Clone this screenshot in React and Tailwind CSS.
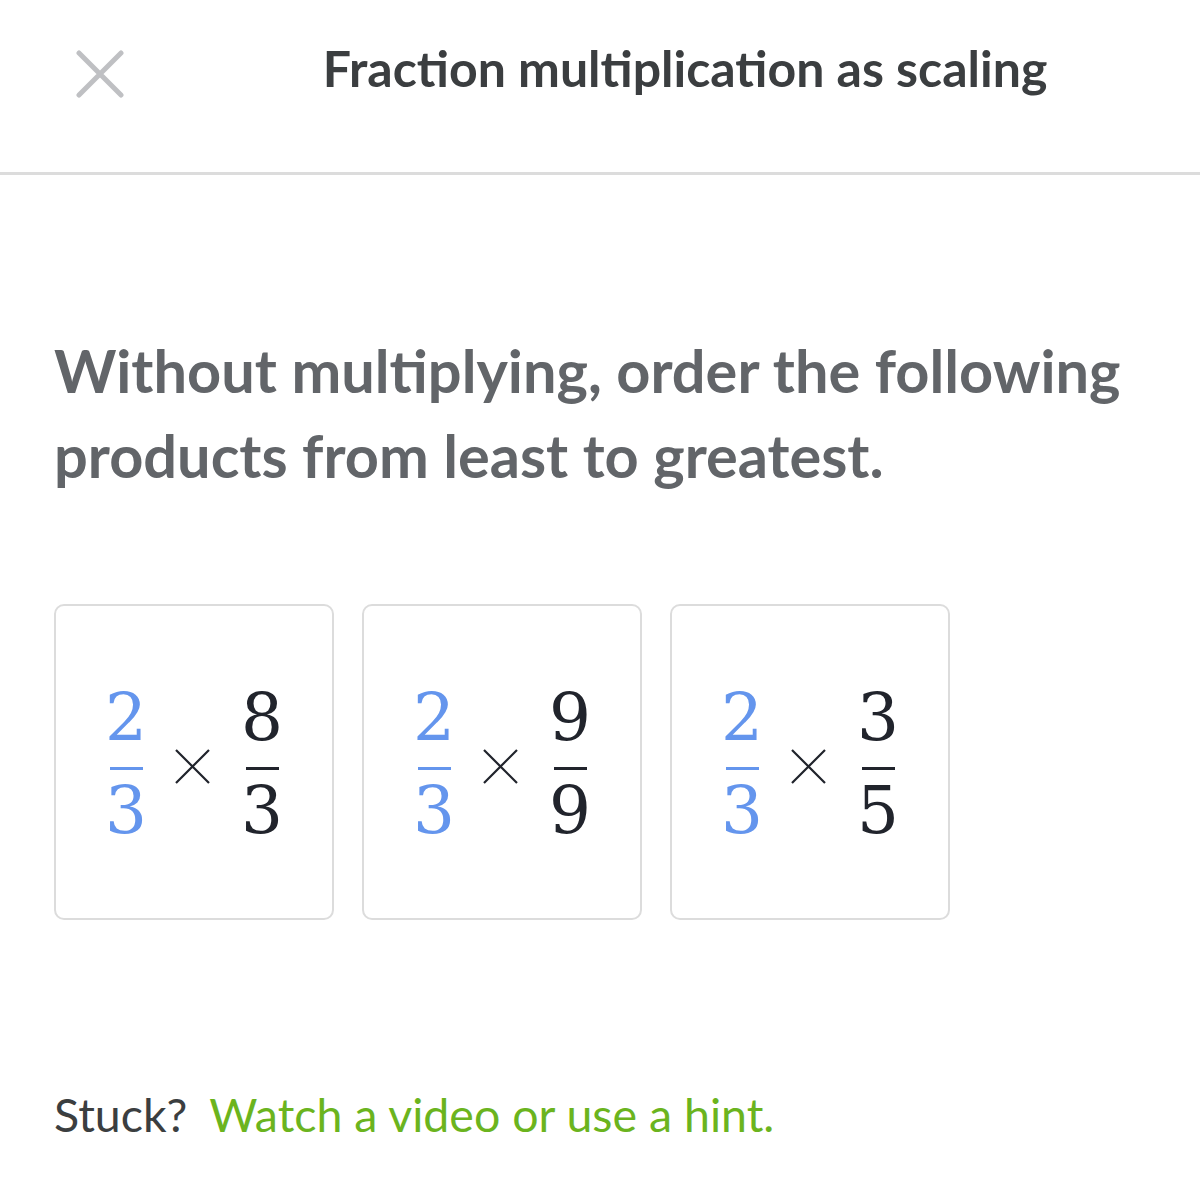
const Fraction = ({ num, den, color }) => (
  <span className={`inline-flex w-[42px] flex-col items-center ${color}`}>
    <span className="leading-none">{num}</span>
    <span className="mb-[8px] mt-[16px] h-[3px] w-[33px] bg-current" />
    <span className="leading-none">{den}</span>
  </span>
);

const ProductCard = ({ second }) => (
  <div className="flex h-[316px] w-[280px] items-center justify-center rounded-[10px] border-2 border-[#dcdcdc] bg-white pt-[5px]">
    <div className="flex items-center text-[66px] font-['DejaVu_Serif',serif]">
      <Fraction num="2" den="3" color="text-[#6495ed]" />
      <svg width="35" height="35" viewBox="0 0 35 35" className="ml-[28px] mr-[31px] mt-[3px] text-[#21242c]">
        <path d="M1 1 L34 34 M34 1 L1 34" stroke="currentColor" strokeWidth="2.2" />
      </svg>
      <Fraction num={second[0]} den={second[1]} color="text-[#21242c]" />
    </div>
  </div>
);

const App = () => {
  const products = [
    ['8', '3'],
    ['9', '9'],
    ['3', '5'],
  ];

  return (
    <div className="min-h-[1200px] bg-white font-['Lato',sans-serif]">
      <header className="flex h-[175px] items-start border-b-[3px] border-[#dcdcdc] pt-[38px]">
        <div className="w-[170px] pl-[76px] pt-[12px]">
          <svg width="48" height="48" viewBox="0 0 48 48" className="text-[#bfc0c3]">
            <path d="M3 3 L45 45 M45 3 L3 45" stroke="currentColor" strokeWidth="5" strokeLinecap="round" />
          </svg>
        </div>
        <h1 className="flex-1 text-center text-[50px] font-bold leading-[60px] text-[#3b3e40]">
          Fraction multiplication as scaling
        </h1>
      </header>

      <main className="px-[54px]">
        <h2 className="mt-[153px] text-[59.5px] font-bold leading-[85px] text-[#626569]">
          Without multiplying, order the following products from least to greatest.
        </h2>

        <div className="mt-[106px] flex gap-[28px]">
          {products.map((p, i) => (
            <ProductCard key={i} second={p} />
          ))}
        </div>

        <p className="mt-[166px] text-[46.5px] leading-[56px] text-[#3b3e40]">
          Stuck?{' '}
          <span className="ml-[10px] text-[#6bb41e]">Watch a video or use a hint.</span>
        </p>
      </main>
    </div>
  );
};

export default App;
